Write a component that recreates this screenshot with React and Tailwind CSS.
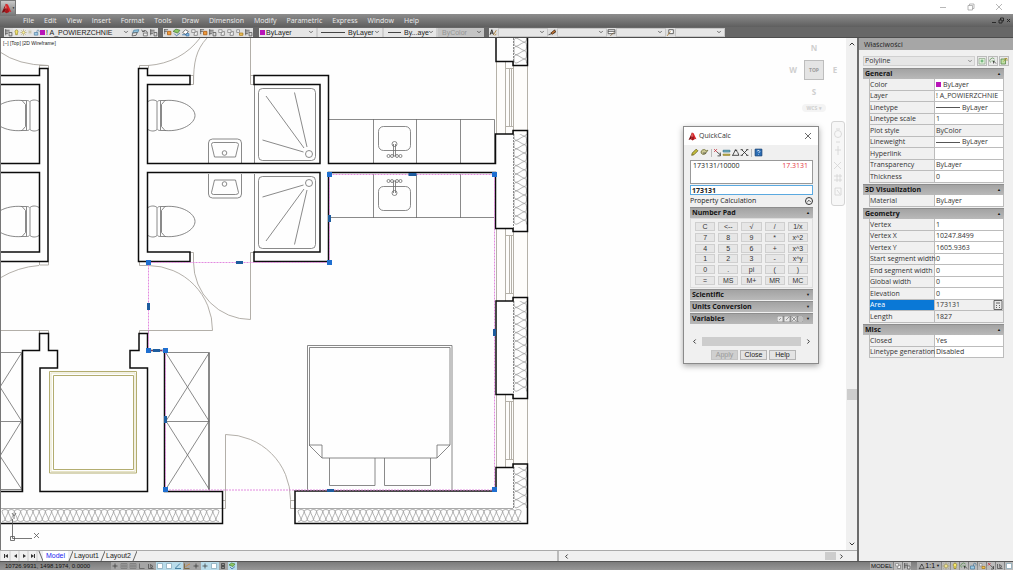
import { ChevronDown, ChevronLeft, ChevronRight, ChevronUp } from "lucide-react";

const menus = [
  "File",
  "Edit",
  "View",
  "Insert",
  "Format",
  "Tools",
  "Draw",
  "Dimension",
  "Modify",
  "Parametric",
  "Express",
  "Window",
  "Help",
];

const propertySections = [
  {
    title: "General",
    rows: [
      { name: "Color", value: "ByLayer", swatch: true },
      { name: "Layer", value: "! A_POWIERZCHNIE" },
      { name: "Linetype", value: "ByLayer", line: true },
      { name: "Linetype scale", value: "1" },
      { name: "Plot style", value: "ByColor", readOnly: true },
      { name: "Lineweight", value: "ByLayer", line: true },
      { name: "Hyperlink", value: "" },
      { name: "Transparency", value: "ByLayer" },
      { name: "Thickness", value: "0" },
    ],
  },
  {
    title: "3D Visualization",
    rows: [{ name: "Material", value: "ByLayer" }],
  },
  {
    title: "Geometry",
    rows: [
      { name: "Vertex", value: "1" },
      { name: "Vertex X", value: "10247.8499" },
      { name: "Vertex Y", value: "1605.9363" },
      { name: "Start segment width", value: "0" },
      { name: "End segment width", value: "0" },
      { name: "Global width", value: "0" },
      { name: "Elevation", value: "0" },
      { name: "Area", value: "173131", selected: true, readOnly: true },
      { name: "Length", value: "1827", readOnly: true },
    ],
  },
  {
    title: "Misc",
    rows: [
      { name: "Closed", value: "Yes" },
      { name: "Linetype generation", value: "Disabled" },
    ],
  },
];

const keys = [
  "C", "<--", "√", "/", "1/x",
  "7", "8", "9", "*", "x^2",
  "4", "5", "6", "+", "x^3",
  "1", "2", "3", "-", "x^y",
  "0", ".", "pi", "(", ")",
  "=", "MS", "M+", "MR", "MC",
];

// every icon is drawn on a 16 x 16 grid: [path, stroke, fill]
const icons = {
  layers: [
    ["M2 4h8M2 7h8M2 10h5M3 2v11", "#555", "none"],
    ["M9 8h5v6H9z", "#555", "#ddd"],
  ],
  bulb: [["M8 2a4 4 0 0 1 2 7v4H6V9a4 4 0 0 1 2-7z", "#8a7a20", "#f4e66a"]],
  sun: [
    ["M8 1v3M8 12v3M1 8h3M12 8h3M3 3l2 2M11 11l2 2M13 3l-2 2M3 13l2-2", "#a89a50", "none"],
    ["M8 5a3 3 0 1 1 0 6a3 3 0 0 1 0-6z", "#a89a50", "#fff5a0"],
  ],
  freeze: [["M8 2v12M3 5l10 6M13 5L3 11", "#b9b48d", "none"]],
  lock: [
    ["M3 8h8v6H3z", "#46779a", "#9ecbe6"],
    ["M9 8V5a2 2 0 0 1 5 0v2", "#46779a", "none"],
  ],
  stack: [
    ["M5 4l9-1-2 5-9 1z", "#4d7fa0", "#8fc3de"],
    ["M3 9l8-1-2 5-7 1z", "#555", "#e8e8e8"],
  ],
  back: [
    ["M3 3l2 4 4-2M5 6c5-3 8 0 8 3", "#444", "none"],
    ["M6 9h7v5H6z", "#666", "#eee"],
  ],
  orange: [
    ["M2 3h7M2 6h5M3 2v9", "#555", "none"],
    ["M8 6h6v6H8z", "#a85a10", "#f09a3c"],
  ],
  green: [
    ["M2 6l5-4 7 2-4 5z", "#4a7d35", "#8ecb63"],
    ["M4 10l4 4 6-5", "#31639a", "none"],
  ],
  blue: [
    ["M3 8l5-5 5 3-4 6z", "#555", "#fff"],
    ["M2 12h7M9 10h5v4H9z", "#2f6fa8", "#9cc6e6"],
  ],
  gray: [
    ["M3 3h6v5H3z", "#888", "#eee"],
    ["M8 8l5-2v7H7z", "#777", "#f7f7f7"],
  ],
  warm: [
    ["M3 3h5v5H3z", "#888", "#eee"],
    ["M8 9h6v4H8z", "#a97714", "#f1c65a"],
  ],
  textStyle: [
    ["M2 12L5 3l3 9M3 9h4", "#111", "none"],
    ["M8 12l5-8M10 13l3-2", "#a8741f", "none"],
  ],
  dimStyle: [
    ["M1 12l12-4M12 3v6", "#333", "none"],
    ["M5 9l6-5 3 2-6 5z", "#4d2f14", "#c07438"],
  ],
  tableStyle: [
    ["M2 3h12v7H2zM2 6h12", "#444", "#fff"],
    ["M6 14l6-6", "#7a5a2c", "none"],
  ],
  leaderStyle: [
    ["M5 3h8v7H5z", "#444", "#fff"],
    ["M2 14l6-8", "#a77a30", "none"],
  ],
  pencil: [["M3 13l1-4 7-7 3 3-7 7z", "#5f5c16", "#c6bd3a"]],
  eraser: [
    ["M2 9a5 5 0 0 1 9-4l3-1-3 4a5 5 0 0 1-9 1z", "#67672e", "#cdc995"],
    ["M5 9h6", "#444", "none"],
  ],
  getPoint: [
    ["M2 2l5 5M7 2L2 7", "#c22230", "none"],
    ["M7 7l7 6M13 8v6H8", "#333", "none"],
  ],
  distance: [
    ["M2 4h12v3H2z", "#2f6f86", "#7cc0d2"],
    ["M2 11h12v2H2z", "#8a7b1e", "#e3d566"],
  ],
  angle: [["M3 13L8 3l4 5M2 13h12l-2-5M7 4h4", "#222", "none"]],
  cross: [["M3 3l10 10M13 3L3 13M1 3h4M11 3h4M1 13h4M11 13h4", "#222", "none"]],
  help: [
    ["M2 2h12v12H2z", "#123f73", "#2a6db5"],
    ["M6 6a2 2 0 1 1 3 2l-1 1M8 11v1", "#fff", "none"],
  ],
  pick: [
    ["M2 3h12v11H2z", "#8ea88a", "#dff0da"],
    ["M8 5v6M5 8h6", "#2a9440", "none"],
  ],
  select: [
    ["M3 11a5 5 0 0 1 8-7M5 8h7", "#558c4a", "none"],
    ["M9 8l5 5M9 8v5", "#222", "none"],
  ],
  quick: [
    ["M2 4h9v10H2z", "#4c7d39", "#bfe0a5"],
    ["M7 9l6-7M9 3h5v5", "#a58b1c", "none"],
  ],
  plus: [["M8 3v10M3 8h10", "#333", "none"]],
  grid: [["M2 3h12v10H2zM6 3v10M10 3v10M2 8h12", "#777", "none"]],
  ortho: [["M3 3v10h10", "#555", "none"]],
  polar: [["M3 13V4M3 13h10M7 5l5 4-4 3z", "#444", "none"]],
  square: [["M3 3h10v10H3z", "#7fa3b5", "#fff"]],
  track: [["M2 13h12M3 12l9-9", "#1b5e86", "none"]],
  chart: [
    ["M3 3v10h10", "#6d5420", "none"],
    ["M5 10l4-4 5-2", "#d77f1e", "none"],
  ],
  clip: [["M5 3h6v10H5zM7 6h2v4H7z", "#333", "none"]],
};

function Icon({ name, className = "size-[9px]" }) {
  return (
    <svg viewBox="0 0 16 16" className={`shrink-0 ${className}`} aria-hidden="true">
      {icons[name].map(([d, stroke, fill]) => (
        <path key={d} d={d} stroke={stroke} fill={fill} strokeWidth="1.4" />
      ))}
    </svg>
  );
}

function AcadLogo({ className }) {
  return (
    <svg viewBox="0 0 16 16" className={className} aria-hidden="true">
      <path d="M7 1L1 14l4-1 3-5z" fill="#7d0f12" />
      <path d="M7 1l3 1 5 11-4-1-3-4z" fill="#d9252a" />
      <path d="M5 13l2-4 3-1 2 5-4 2z" fill="#a8161b" />
      <path d="M7 1L5 9l3-2z" fill="#ee6a66" />
    </svg>
  );
}

function TitleBar() {
  return (
    <header className="flex h-[14px] items-center justify-end bg-white pr-[10px] text-[#9a9a9a]">
      <div className="flex gap-5">
        <button aria-label="Minimize">
          <svg className="size-2" viewBox="0 0 8 8" fill="none" stroke="currentColor">
            <path d="M1 4.5h6" strokeWidth="0.7" />
          </svg>
        </button>
        <button aria-label="Restore">
          <svg className="size-2" viewBox="0 0 8 8" fill="none" stroke="currentColor">
            <path d="M1 2.5h4.5V7H1zM2.5 2.5V1H7v4.5H5.5" strokeWidth="0.7" />
          </svg>
        </button>
        <button aria-label="Close">
          <svg className="size-2" viewBox="0 0 8 8" fill="none" stroke="currentColor">
            <path d="M1 1l6 6M7 1L1 7" strokeWidth="0.7" />
          </svg>
        </button>
      </div>
    </header>
  );
}

function MenuBar() {
  return (
    <nav className="flex h-[13px] items-center bg-linear-to-b from-[#8d8d8d] to-[#5f5f5f] pl-[23px] pr-[2px] text-[7px] leading-[13px] text-[#ececec]">
      <div className="flex flex-1 gap-[10px]">
        {menus.map((menu) => (
          <button key={menu}>{menu}</button>
        ))}
      </div>
      <svg className="h-[7px] w-5" viewBox="0 0 20 7" fill="none" stroke="#222" strokeWidth="0.9">
        <path d="M1 5.5h4M8 3h3v3H8zM9.5 3V1h3v3H11M16 2l3 3M19 2l-3 3" />
      </svg>
    </nav>
  );
}

function ToolSelect({ label, value, className = "", children, disabled }) {
  return (
    <div className={`relative flex h-[9px] items-center ${disabled ? "bg-[#c4c4c4]" : "bg-[#e6e6e6]"} ${className}`}>
      {children}
      <select
        aria-label={label}
        disabled={disabled}
        className={`h-[9px] min-w-0 flex-1 appearance-none text-[7px] leading-[9px] ${disabled ? "text-[#949494]" : "text-[#222]"}`}
      >
        <option>{value}</option>
      </select>
      <ChevronDown className="pointer-events-none absolute right-[2px] size-[6px] text-[#444]" strokeWidth={3} />
    </div>
  );
}

function IconGroup({ names }) {
  return (
    <div className="flex h-[9px] items-center bg-[#dedede]">
      {names.map((name, i) => (
        <button key={i} aria-label={name}>
          <Icon name={name} />
        </button>
      ))}
    </div>
  );
}

function Toolbar() {
  const line = (width) => <span className={`${width} mr-[3px] border-t border-[#444]`} />;
  return (
    <div className="flex h-[11px] items-center border-b border-[#4d4d4d] bg-[#676767] pl-1 font-['Liberation_Sans']">
      <IconGroup names={["layers"]} />
      <ToolSelect label="Layer" value="! A_POWIERZCHNIE" className="w-[118px]">
        <Icon name="bulb" className="size-[7px]" />
        <Icon name="sun" className="size-[7px]" />
        <Icon name="freeze" className="size-[6px]" />
        <Icon name="lock" className="size-[7px]" />
        <span className="mr-px size-[5px] bg-[#b814b8]" />
      </ToolSelect>
      <IconGroup names={["stack", "back", "layers"]} />
      <div className="ml-[5px]">
        <IconGroup
          names={["orange", "green", "blue", "gray", "orange", "layers", "gray", "gray", "warm", "layers"]}
        />
      </div>
      <div className="ml-[6px] flex gap-[2px] bg-[#cfcfcf]">
        <ToolSelect label="Color" value="ByLayer" className="w-[57px] pl-px">
          <span className="mr-px size-[5px] bg-[#b814b8]" />
        </ToolSelect>
        <ToolSelect label="Linetype" value="ByLayer" className="w-[64px] pl-[3px]">
          {line("w-6")}
        </ToolSelect>
        <ToolSelect label="Lineweight" value="By...aye" className="w-[52px] pl-1">
          {line("w-[13px]")}
        </ToolSelect>
        <ToolSelect label="Plot style" value="ByColor" className="w-[46px] pl-1" disabled />
      </div>
      <div className="ml-[5px] flex">
        {[
          ["Text style", "textStyle"],
          ["Dimension style", "dimStyle"],
          ["Table style", "tableStyle"],
          ["Multileader style", "leaderStyle"],
        ].map(([label, icon]) => (
          <div key={label} className="flex">
            <IconGroup names={[icon]} />
            <ToolSelect label={label} value="" className="w-[50px] border border-[#c6c6c6]" />
          </div>
        ))}
      </div>
    </div>
  );
}

// insulation hatch, a looping curve that runs along a strip of wall
function batting(from, to, near, far, step, pull, vertical) {
  const p = (a, b) => (vertical ? `${b} ${a}` : `${a} ${b}`);
  let d = `M${p(from, far)}`;
  for (let a = from; a + step <= to; a += step) {
    const m = a + step / 2;
    d += `C${p(a + pull, far)} ${p(m - pull, near)} ${p(m, near)}`;
    d += `C${p(m + pull, near)} ${p(a + step - pull, far)} ${p(a + step, far)}`;
  }
  return d;
}

function Toilet() {
  return (
    <path d="M148 101.5c3-2 7-2 9 0v28c-2 2-6 2-9 0M157.5 101.5c1-1 2-1 3-1v30c-1 0-2 0-3-1M160.5 100.5h5M160.5 130.5h5M165 100.5c17-1.5 30 7 30 15s-13 16.5-30 15l-3.5-4v-22z" />
  );
}

function Bathroom() {
  return (
    <>
      <path d="M254.5 84v79M208.5 163v-20q0-4 4-4h25q4 0 4 4v20M213.5 142.5h22q3 0 3 2l-3 12.5h-21l-3-12.5q0-2 2-2" />
      <circle cx="224.5" cy="153" r="2.3" />
      <rect x="258.5" y="88.5" width="57" height="72" rx="4" />
      <circle cx="309" cy="154" r="3.5" />
      <path d="M266 96l38 52M294.5 92.5l12.5 54.5M262.5 140l41 12" />
    </>
  );
}

function Sink() {
  return (
    <>
      <rect x="378.5" y="126.5" width="32" height="24" rx="5" />
      <circle cx="394.5" cy="144" r="2.5" />
      <path d="M393.5 144v12h2v-12" />
      <circle cx="388.5" cy="156" r="1.5" />
      <circle cx="392" cy="156" r="1.5" />
      <circle cx="397" cy="156" r="1.5" />
      <circle cx="400.5" cy="156" r="1.5" />
    </>
  );
}

function WindowFrame({ y }) {
  return (
    <g transform={`translate(0 ${y})`} stroke="#b5b1a8">
      <path d="M496 1v72h31V4h-14" fill="#fefdfb" stroke="none" />
      <path d="M496.5 0v73M505.5 1v72M509.5 7v58M511.5 7v58M513.5 0v73M527.5 4v66M506 7.5h7M506 65.5h7" />
    </g>
  );
}

function FloorPlan() {
  const corners = [
    [329, 174], [494, 174], [494, 489], [165, 489], [165, 350], [148, 350], [148, 262], [329, 262],
  ];
  const mids = [
    [412, 174, 8, 3], [329, 218, 3, 7], [494, 332, 3, 7], [330, 490, 7, 3],
    [165, 419, 3, 7], [156, 350, 7, 3], [148, 306, 3, 7], [239, 262, 7, 3],
  ];
  return (
    <svg className="absolute inset-0 size-full" role="img" aria-label="Floor plan">
      <g transform="translate(-1 -38)" fill="none">
        <g stroke="#8f8f8f" strokeWidth="0.7">
          <path d={batting(2, 221, 509.5, 521.5, 6.2, 9, false)} />
          <path d={batting(298, 524, 509.5, 521.5, 6.2, 9, false)} />
          <path d={batting(38, 65, 514, 526.5, 8.4, 12, true)} />
          <path d={batting(132, 231, 514, 526.5, 8.4, 12, true)} />
          <path d={batting(299, 398, 514, 526.5, 8.4, 12, true)} />
          <path d={batting(466, 510, 514, 526.5, 8.4, 12, true)} />
        </g>
        <path d="M0 508.5h222M295 508.5h218" stroke="#aaa" />
        <path d="M513.5 38v27M513.5 131v100M513.5 298v100M513.5 464v44" stroke="#888" strokeDasharray="2 1" />

        {/* doors */}
        <g stroke="#aaa69f" strokeWidth="0.9">
          <path d="M0 52Q18 65 48 65.5M39.5 65.5h9v3M39.5 65v3M139.5 68v-2.5h9v3M148 65.5C170 64 188 54 200 38M207 38C196 50 193.5 62 193.5 84M190 75.5h3.5v9H190M250.5 38v46.5h4M250.5 75.5h3.5" />
          <path d="M190 252.5h3.5V262A57 57.5 0 0 0 250.5 319.5V252.5h3.5M139.5 262v3.5h9A64.5 64.5 0 0 1 212.5 330.5H139.5v3M148.5 330v4M39.5 262v3h9v-3M39 265.5Q18 267 0 278M0 330.5h48.5v3M39.5 330v4" />
          <path d="M222 508.5h3.5V434.5A65 65 0 0 1 290.5 499.5V508.5H295M222 500.5h3.5M290.5 500.5h4" />
        </g>
        <WindowFrame y={61} />
        <WindowFrame y={228} />
        <WindowFrame y={394} />

        {/* fixtures */}
        <g stroke="#6c6c6c" strokeWidth="0.8">
          <Toilet />
          <g transform="translate(0 106)"><Toilet /></g>
          <g transform="translate(187 0) scale(-1 1)"><Toilet /></g>
          <g transform="translate(187 106) scale(-1 1)"><Toilet /></g>
          <Bathroom />
          <g transform="translate(0 337) scale(1 -1)"><Bathroom /></g>
          <Sink />
          <g transform="translate(0 337) scale(1 -1)"><Sink /></g>
          <path d="M329 119.5h165.5V163M373.5 119v44M416.5 119v44M460.5 119v44M329 217.5h165M373.5 174v44M416.5 174v44M460.5 174v44" />
          <path d="M165 352.5h44.5v138M165 421.5h44.5M166 353l43 68-43 68M209 353l-43 68 43 68M208.5 353v137" />
          <path d="M0 352.5h21.5v138M0 421.5h21.5M21.5 353L0 387l21.5 34L0 456l21.5 33M0 489.5h22" />
          <path d="M307.5 490V345.5h144.5V490M309.5 445V347.5h140.5V445h-13v13h-115v-13h-13l13 13M450 445l-13 13M329.5 458v27.5H375V458M384.5 458v27.5h46V458" />
        </g>
        <g stroke="#b3ad70" strokeWidth="1">
          <path d="M49.5 371.5h87v101.5h-87zM53.5 375.5h80v94h-80z" />
          <path d="M51 373h84v98.5H51z" stroke="#e6e3c6" />
        </g>

        {/* walls */}
        <g stroke="#0c0c0c" strokeWidth="1.5" strokeLinejoin="miter">
          <path d="M0 75.5h39.5v-7H48V261.5H0M0 84.5h39.5v79H0M0 172.5h39.5v79.5H0" />
          <path d="M190 84.5h-42.5v79H320v-79h-66v-9h74.5v88H495.5V134h17.5v-3.5h14.5v101H513V228.5h-17.5v-56h-167v89H254V252h66v-79.5H147.5V252H190v9.5h-51.5v-193h9v7H190z" />
          <path d="M496 38v23.5h17v4h14.5V38M496 394.5V301h17v-3.5h14.5v101H513v-4zM295 491h201V467.5h17V464h14.5v59.5H295z" />
          <path d="M0 491.5h22.5V350.5h17v-17h9v17h9V368H40v123.5h107.5V368H130V350.5h9v-17h8.5v17H164.5v141h58v32H0" />
        </g>

        {/* selected polyline */}
        <path d="M329.5 174.5h165v315.5H165.5V350.5H148.5V262.5h181z" stroke="#e07ddc" strokeWidth="0.9" strokeDasharray="2 1" />
        <g fill="#1f6fd0">
          {corners.map(([x, y]) => (
            <rect key={`${x}-${y}`} x={x - 2} y={y - 2} width="5" height="5" />
          ))}
          {mids.map(([x, y, w, h]) => (
            <rect key={`${x}-${y}`} x={x - (w - 1) / 2} y={y - (h - 1) / 2} width={w} height={h} fill="#1d5c9e" />
          ))}
        </g>

        {/* ucs icon */}
        <path d="M12.5 538.5V519M12.5 538.5H32M10.5 536.5h4v4h-4zM34 533l5 5M39 533l-5 5M12 513l2 3 2-3M14 516v3" stroke="#555" strokeWidth="0.8" />
      </g>
    </svg>
  );
}

function ViewCube() {
  return (
    <div className="absolute right-0 top-1 grid grid-cols-[22px_20px_22px] items-center justify-items-center text-[8px] font-bold leading-3 text-[#cfcfcf]">
      <span className="col-start-2 row-start-1">N</span>
      <span className="col-start-1 row-start-2">W</span>
      <button className="col-start-2 row-start-2 my-[6px] size-5 border border-[#bdbdbd] bg-[#e4e4e4] text-[5px] text-[#999]">
        TOP
      </button>
      <span className="col-start-3 row-start-2">E</span>
      <span className="col-start-2 row-start-3">S</span>
      <button className="col-start-2 row-start-4 mt-[6px] whitespace-nowrap rounded-sm bg-[#f4f4f4] px-1 text-[5px] leading-2">
        WCS ▾
      </button>
    </div>
  );
}

function NavBar() {
  return (
    <div className="absolute right-[12px] top-[83px] rounded-[3px] border border-[#d4d4d4] bg-[#f7f7f7]">
      <svg className="h-[83px] w-3" viewBox="0 0 12 83" fill="none" stroke="#d3d3d3" strokeWidth="0.8">
        <circle cx="6" cy="12" r="3.5" />
        <path d="M4 7h4M4 20h4M6 24v9M3 28h6M2 40l7 7M9 40l-7 7M2 54h8M2 58h8M5 52v8M8 52v8M3 66h6v7H3zM5 68l3 4" />
      </svg>
    </div>
  );
}

function SectionHeader({ title, mark, children }) {
  return (
    <h3 className="flex h-[11px] items-center border-t border-[#8d8d8d] bg-linear-to-b from-[#a3a3a3] to-[#b9b9b9] px-[2px] text-[7px] font-bold leading-[10px] text-[#141414]">
      <span className="flex-1">{title}</span>
      {children}
      <span className="mr-px text-[4px]">{mark}</span>
    </h3>
  );
}

function QuickCalc() {
  return (
    <section className="absolute right-[38px] top-[88px] w-[136px] border border-[#8a8a8a] bg-[#f0f0f0] text-[#222] shadow-[0_2px_6px_rgba(0,0,0,0.35)]">
      <div className="flex h-[18px] items-center bg-white pl-1 pr-[6px]">
        <AcadLogo className="mr-[2px] size-[9px]" />
        <h2 className="flex-1 text-[7px] leading-[18px] text-[#333]">QuickCalc</h2>
        <button aria-label="Close QuickCalc">
          <svg className="size-2" viewBox="0 0 8 8" stroke="#444" strokeWidth="0.8">
            <path d="M1 1l6 6M7 1L1 7" />
          </svg>
        </button>
      </div>
      <div className="flex flex-col pl-[6px] pr-[5px]">
        <div className="flex h-[15px] items-center">
          {["pencil", "eraser"].map((name) => (
            <button key={name} aria-label={name} className="w-[10px]"><Icon name={name} /></button>
          ))}
          <span className="mx-px h-2 w-px bg-[#bbb]" />
          {["getPoint", "distance", "angle", "cross"].map((name) => (
            <button key={name} aria-label={name} className="w-[9px]"><Icon name={name} /></button>
          ))}
          <span className="mx-[2px] h-2 w-px bg-[#bbb]" />
          <button aria-label="help"><Icon name="help" /></button>
        </div>
        <div className="flex h-6 justify-between border border-[#999] bg-white px-[2px] text-[7px] leading-[10px]">
          <span>173131/10000</span>
          <span className="pr-[2px] text-[#e5383f]">17.3131</span>
        </div>
        <input
          aria-label="Expression"
          defaultValue="173131"
          className="mt-px h-[10px] border border-[#5aa9e0] bg-white px-px text-[7px] font-bold leading-2 outline-none"
        />
        <div className="flex h-3 items-center justify-between text-[7px]">
          <span>Property Calculation</span>
          <button aria-label="Less" className="rounded-full border border-[#333]">
            <ChevronUp className="size-[6px]" strokeWidth={3} />
          </button>
        </div>
        <SectionHeader title="Number Pad" mark="▲" />
        <div className="h-[70px] border border-[#dcdcdc] px-1 pt-[3px]">
          <div className="grid h-[63px] grid-cols-5 content-between gap-x-[3px]">
            {keys.map((key) => (
              <button
                key={key}
                className="h-[9px] border border-[#cfcfcf] bg-[#e6e6e6] font-['Liberation_Sans'] text-[7px] leading-[7px] text-[#333]"
              >
                {key}
              </button>
            ))}
          </div>
        </div>
        <div className="mt-px flex flex-col gap-px">
          <SectionHeader title="Scientific" mark="▼" />
          <SectionHeader title="Units Conversion" mark="▼" />
          <SectionHeader title="Variables" mark="▼">
            <svg className="mr-[3px] h-[6px] w-[26px]" viewBox="0 0 26 6" stroke="#777" strokeWidth="0.7" fill="#e6e6e6">
              <path d="M0 0h6v6H0zM7 0h6v6H7zM14 0h6v6h-6zM21 0h5v6h-5zM2 4l2-2M9 4l3-3M15 1l4 4M19 1l-4 4M22 2h3M22 4h3" />
            </svg>
          </SectionHeader>
        </div>
        <div className="mt-3 flex h-[10px] items-center gap-1 px-px">
          <ChevronLeft className="size-[7px]" strokeWidth={3} />
          <div className="h-[9px] flex-1 bg-[#cdcdcd]" />
          <ChevronRight className="size-[7px]" strokeWidth={3} />
        </div>
        <div className="mb-[3px] mt-1 flex justify-center gap-[2px] pl-[4px] font-['Liberation_Sans'] text-[7px] leading-2">
          <button disabled className="h-[10px] w-[27px] border border-[#c4c4c4] bg-[#cfcfcf] text-[#999]">Apply</button>
          <button className="h-[10px] w-[27px] border border-[#b5b5b5] bg-[#e4e4e4]">Close</button>
          <button className="h-[10px] w-[27px] border border-[#b5b5b5] bg-[#e4e4e4]">Help</button>
        </div>
      </div>
    </section>
  );
}

function DrawingArea() {
  return (
    <main className="relative flex min-w-0 flex-1 flex-col">
      <div className="flex flex-1">
        <div className="relative flex-1 overflow-hidden border-l border-[#777] bg-[#fefefe]">
          <FloorPlan />
          <p className="relative pl-[2px] pt-px font-['Liberation_Sans'] text-[5px] leading-2 text-[#222]">
            [–] [Top] [2D Wireframe]
          </p>
          <ViewCube />
        </div>
        <div className="flex w-[11px] flex-col items-center bg-[#f0f0f0] py-[2px] text-[#333]">
          <ChevronUp className="size-2" strokeWidth={3} />
          <div className="mt-[341px] h-[11px] w-[10px] bg-[#cdcdcd]" />
          <ChevronDown className="mt-auto size-2" strokeWidth={3} />
        </div>
      </div>
      <LayoutTabs />
      <NavBar />
      <QuickCalc />
    </main>
  );
}

function LayoutTabs() {
  return (
    <div className="flex h-[11px] items-center border-t border-[#aaa] bg-[#f0f0f0] font-['Liberation_Sans'] text-[7px] leading-[10px] text-[#222]">
      <svg className="h-[10px] w-[38px]" viewBox="0 0 38 10" fill="#333" stroke="none">
        <path d="M4 3h1v4H4zM8 3v4L5 5zM17 3v4l-3-2zM23 3v4l3-2zM31 3v4l3-2zM34 3h1v4h-1z" />
        <path d="M0 0v10M10 0v10M19 0v10M28 0v10M37 0v10" stroke="#ccc" />
      </svg>
      <nav className="flex h-full">
        {["Model", "Layout1", "Layout2"].map((tab, i) => (
          <div key={tab} className="flex">
            {i === 0 && (
              <svg className="h-[10px] w-[5px]" viewBox="0 0 5 10" stroke="#444" strokeWidth="0.8"><path d="M1 0l4 10" /></svg>
            )}
            <button className={i === 0 ? "bg-white px-[3px] text-[#1c1cf0]" : "px-px"}>{tab}</button>
            <svg className="h-[10px] w-[5px]" viewBox="0 0 5 10" stroke="#444" strokeWidth="0.8"><path d="M5 0L1 10" /></svg>
          </div>
        ))}
      </nav>
      <div className="flex-1" />
      <div className="flex h-full w-[35%] items-center border-l-2 border-[#bbb] pl-1">
        <ChevronLeft className="size-[7px]" strokeWidth={3} />
        <div className="ml-auto h-2 w-[11px] bg-[#cdcdcd]" />
        <ChevronRight className="ml-[2px] mr-3 size-[7px]" strokeWidth={3} />
      </div>
    </div>
  );
}

function PropertiesPanel() {
  return (
    <aside className="w-[156px] border-l-2 border-[#6b6b6b] bg-[#f0f0f0] text-[7px] text-[#333]">
      <h2 className="h-[12px] bg-[#a6a6a6] pl-[5px] leading-[13px] text-[#222]">Właściwości</h2>
      <div className="mt-[6px] flex items-center gap-[2px] pl-[4px] pr-1">
        <div className="relative flex flex-1 items-center">
          <select
            aria-label="Selected object"
            className="h-[10px] w-full appearance-none border border-[#d0d0d0] bg-[#e6e6e6] pl-px leading-2"
          >
            <option>Polyline</option>
          </select>
          <ChevronDown className="pointer-events-none absolute right-[2px] size-[6px]" />
        </div>
        <div className="flex gap-px">
          {["pick", "select", "quick"].map((name) => (
            <button key={name} aria-label={name} className="border border-[#bbb] bg-[#e9e9e9]">
              <Icon name={name} className="size-2" />
            </button>
          ))}
        </div>
      </div>
      <div className="mr-[9px] mt-[2px] flex flex-col gap-px pl-[4px]">
        {propertySections.map((section) => (
          <section key={section.title}>
            <SectionHeader title={section.title} mark="▲" />
            <div className="pl-[6px]">
              <table className="w-full table-fixed border-separate border-spacing-0 border-l border-[#bcbcbc]">
                <tbody>
                  {section.rows.map((row) => (
                    <tr key={row.name} className="odd:h-[12px] even:h-[11px]">
                      <th
                        scope="row"
                        className={`w-[65px] whitespace-nowrap border-b border-r border-[#bcbcbc] p-0 text-left font-normal leading-[10px] ${row.selected ? "bg-[#0a78d6] text-white" : ""}`}
                      >
                        {row.name}
                      </th>
                      <td
                        className={`border-b border-r border-[#bcbcbc] p-0 pl-px leading-[10px] ${row.readOnly ? "bg-[#f0f0f0]" : "bg-white"}`}
                      >
                        <div className="flex items-center whitespace-nowrap">
                          {row.swatch && <span className="mr-[2px] size-[5px] bg-[#b814b8]" />}
                          {row.line && <span className="mr-[2px] w-6 border-t border-[#555]" />}
                          {row.value}
                          {row.selected && (
                            <button aria-label="Open QuickCalc" className="ml-auto">
                              <svg className="h-[10px] w-[10px]" viewBox="0 0 10 10" fill="#e8e8e8" stroke="#555">
                                <path d="M1 0.5h8v9H1zM3 3h4M3 5.5h1M6 5.5h1M3 7.5h1M6 7.5h1" strokeWidth="0.9" />
                              </svg>
                            </button>
                          )}
                        </div>
                      </td>
                    </tr>
                  ))}
                </tbody>
              </table>
            </div>
          </section>
        ))}
      </div>
    </aside>
  );
}

function StatusBar() {
  const toggles = [
    "plus", "grid", "grid", "ortho", "polar", "square", "square", "track", "chart", "plus", "plus", "square", "clip", "green",
  ];
  const active = [5, 6, 7, 10, 11, 13];
  return (
    <footer className="flex h-[9px] items-center border-t border-[#555] bg-linear-to-b from-[#7c7c7c] to-[#979797] pl-[5px] font-['Liberation_Sans'] text-[7px] leading-2 text-[#111]">
      <span className="w-[106px] text-[6px]">10726.9931, 1498.1974, 0.0000</span>
      <div className="flex">
        {toggles.map((name, i) => (
          <button
            key={i}
            aria-label={`${name} ${i}`}
            className={`w-[9px] ${active.includes(i) ? "bg-[#b9dcea]" : "bg-[#a5a5a5]"}`}
          >
            <Icon name={name} className="size-2" />
          </button>
        ))}
      </div>
      <div className="ml-auto flex items-center gap-px">
        <button className="bg-[#adadad] px-px text-[6px]">MODEL</button>
        {["gray", "layers"].map((name) => (
          <button key={name} aria-label={name} className="bg-[#bbb]"><Icon name={name} className="size-2" /></button>
        ))}
        <button className="ml-[5px] flex items-center bg-[#adadad] px-px">
          <Icon name="angle" className="size-[7px]" />
          1:1
          <span className="ml-px text-[4px]">▼</span>
        </button>
        {["sun", "bulb", "select", "lock", "warm", "getPoint", "polar", "square"].map((name) => (
          <button key={name} aria-label={name} className="bg-[#bbb]"><Icon name={name} className="size-2" /></button>
        ))}
      </div>
    </footer>
  );
}

export default function App() {
  return (
    <div className="relative flex h-screen flex-col overflow-hidden bg-[#f0f0f0] font-['Open_Sans',sans-serif]">
      <TitleBar />
      <button
        aria-label="Application menu"
        className="absolute left-0 top-0 flex h-4 w-4 items-center border border-[#777] bg-linear-to-b from-[#c9c9c9] to-[#7a7a7a]"
      >
        <AcadLogo className="size-[11px]" />
        <span className="text-[3px] text-[#222]">▼</span>
      </button>
      <MenuBar />
      <Toolbar />
      <div className="flex min-h-0 flex-1">
        <DrawingArea />
        <PropertiesPanel />
      </div>
      <StatusBar />
    </div>
  );
}
